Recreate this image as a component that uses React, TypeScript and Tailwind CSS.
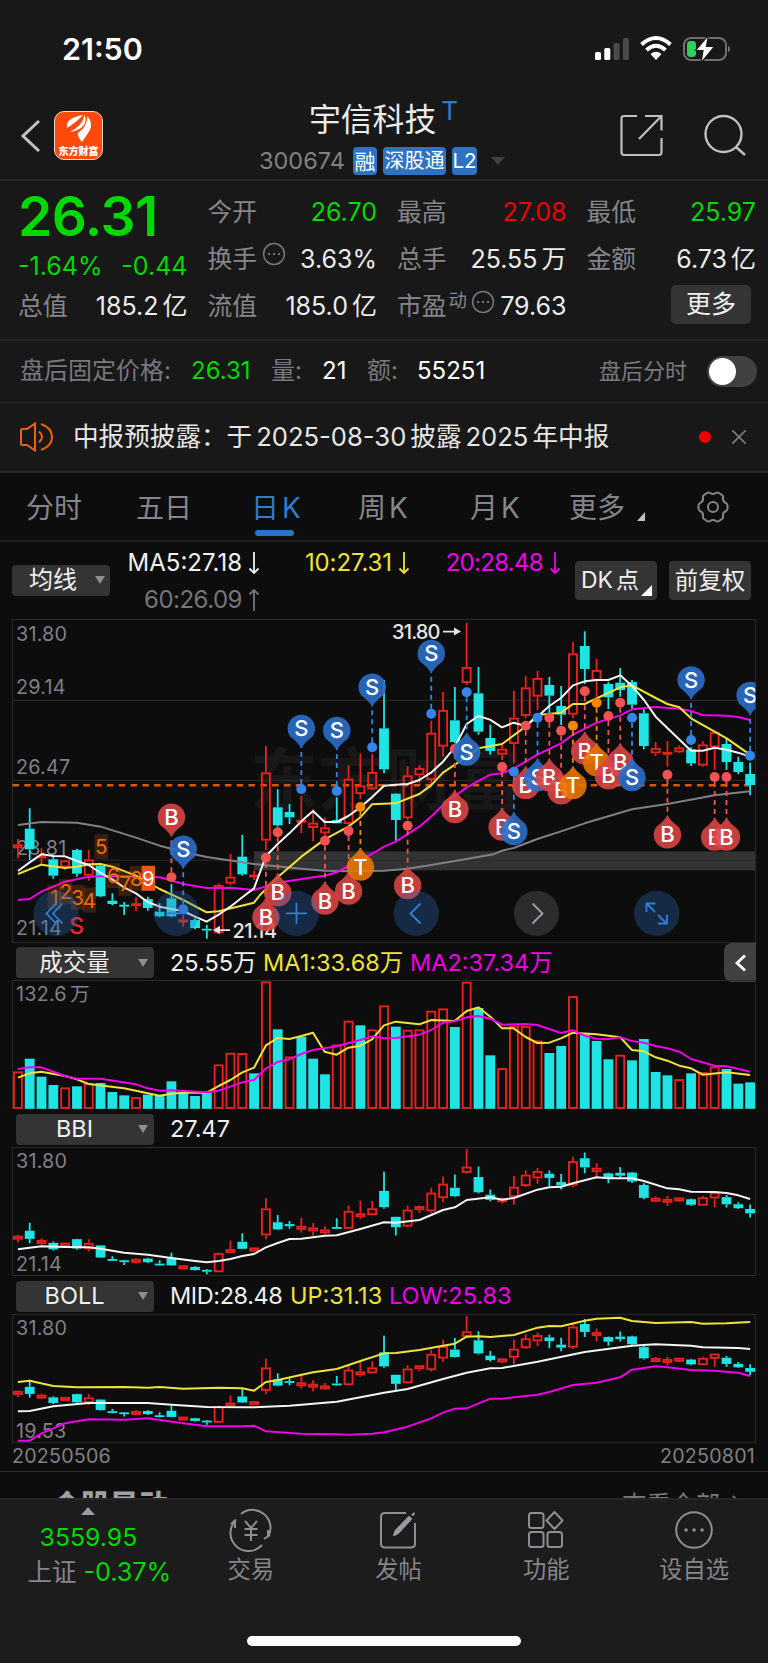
import type { ReactNode } from "react";

type Candle = [number, number, number, number, "r" | "c"];
type Point = [number, number];

const RED = "#e8201f";
const CYAN = "#20e4e4";
const STEP = 11.81;

// high, body top, body bottom, low (3 units per px, measured from y = 610)
const candles: Candle[] = [
  [687, 703, 715, 745, "r"], [595, 656, 718, 750, "c"], [715, 738, 744, 762, "r"],
  [738, 748, 797, 806, "c"], [750, 751, 772, 780, "r"], [716, 720, 791, 800, "c"],
  [720, 748, 797, 812, "r"], [765, 767, 859, 862, "c"], [850, 872, 882, 886, "c"],
  [876, 884, 890, 915, "c"], [862, 880, 888, 902, "r"], [860, 867, 894, 902, "c"],
  [880, 905, 919, 922, "c"], [822, 865, 919, 922, "c"], [915, 930, 936, 950, "r"],
  [925, 930, 954, 958, "c"], [945, 957, 961, 986, "c"], [820, 825, 970, 972, "r"],
  [732, 800, 821, 826, "r"], [675, 740, 793, 797, "c"], [782, 795, 801, 810, "r"],
  [408, 487, 692, 720, "r"], [538, 592, 646, 650, "c"], [582, 606, 622, 642, "c"],
  [558, 630, 638, 670, "r"], [598, 638, 654, 694, "r"], [622, 652, 670, 684, "r"],
  [562, 630, 640, 640, "c"], [466, 506, 642, 645, "r"], [430, 526, 552, 568, "r"],
  [432, 486, 538, 540, "r"], [210, 355, 478, 490, "c"], [550, 551, 630, 692, "c"],
  [468, 496, 625, 630, "r"], [466, 474, 496, 520, "r"], [332, 368, 510, 522, "r"],
  [246, 300, 410, 440, "r"], [231, 331, 396, 400, "c"], [38, 171, 219, 226, "r"],
  [171, 250, 365, 374, "c"], [344, 384, 423, 434, "c"], [405, 416, 434, 450, "r"],
  [242, 323, 402, 460, "r"], [198, 232, 318, 325, "r"], [182, 204, 260, 300, "r"],
  [201, 225, 257, 320, "c"], [228, 288, 314, 345, "c"], [97, 130, 314, 325, "r"],
  [64, 108, 177, 222, "c"], [146, 180, 212, 260, "r"], [216, 222, 262, 298, "c"],
  [174, 218, 240, 260, "c"], [210, 216, 284, 296, "c"], [298, 310, 408, 418, "c"],
  [396, 414, 430, 438, "r"], [393, 427, 433, 470, "r"], [406, 412, 427, 430, "r"],
  [412, 418, 460, 468, "c"], [394, 403, 467, 470, "r"], [364, 366, 412, 480, "r"],
  [386, 402, 456, 480, "c"], [440, 456, 486, 492, "c"], [458, 492, 525, 556, "c"],
];

// moving averages of the main pane, [x, y] in the same units
const ma5: Point[] = [[54, 783], [89, 757], [124, 733], [160, 738], [195, 739], [231, 753], [266, 765], [302, 789], [337, 808], [372, 832], [408, 850], [443, 876], [479, 890], [514, 897], [550, 903], [585, 920], [620, 935], [656, 914], [691, 890], [727, 862], [762, 835], [798, 738], [833, 702], [868, 670], [904, 634], [939, 603], [974, 636], [1010, 636], [1045, 618], [1081, 592], [1116, 562], [1152, 527], [1187, 524], [1223, 522], [1258, 510], [1293, 488], [1329, 455], [1364, 412], [1400, 342], [1435, 318], [1470, 329], [1506, 352], [1541, 338], [1577, 348], [1612, 320], [1648, 288], [1683, 264], [1719, 226], [1754, 214], [1790, 210], [1825, 210], [1861, 196], [1896, 228], [1932, 270], [1967, 320], [2073, 422], [2108, 422], [2144, 413], [2180, 419], [2214, 428], [2250, 440]];
const ma10: Point[] = [[54, 792], [124, 764], [195, 774], [231, 770], [266, 763], [302, 762], [337, 770], [408, 797], [479, 837], [550, 870], [620, 907], [656, 904], [762, 878], [780, 855], [833, 802], [904, 740], [974, 688], [1045, 650], [1081, 622], [1116, 583], [1187, 580], [1258, 552], [1293, 526], [1329, 488], [1400, 440], [1435, 415], [1506, 402], [1577, 350], [1612, 315], [1683, 308], [1719, 282], [1754, 282], [1861, 232], [1896, 226], [1967, 264], [2002, 282], [2038, 292], [2073, 325], [2180, 385], [2250, 434]];
const ma20: Point[] = [[54, 870], [89, 867], [124, 845], [195, 815], [266, 800], [337, 798], [479, 802], [550, 822], [620, 834], [691, 833], [762, 840], [833, 818], [939, 802], [974, 797], [1010, 787], [1045, 768], [1116, 732], [1152, 710], [1187, 695], [1258, 650], [1293, 620], [1329, 585], [1400, 532], [1470, 494], [1506, 490], [1541, 476], [1612, 434], [1683, 400], [1719, 374], [1790, 338], [1861, 316], [1896, 298], [1967, 291], [2038, 296], [2073, 303], [2108, 315], [2180, 317], [2214, 321], [2250, 330]];
const ma60: Point[] = [[54, 645], [124, 636], [231, 638], [302, 650], [408, 683], [479, 707], [550, 726], [620, 741], [762, 762], [904, 776], [974, 782], [1045, 784], [1152, 782], [1223, 776], [1293, 765], [1400, 747], [1480, 733], [1506, 722], [1541, 714], [1612, 687], [1683, 664], [1754, 640], [1896, 598], [2002, 582], [2144, 556], [2250, 544]];

// volume bars, y of the top edge (3 units per px, from y = 940)
const volume = "r395 c356 c410 c435 r443 c439 r430 c429 c456 c466 r472 c464 c468 c424 c458 c468 c458 r374 r339 r340 c400 r125 c268 r350 c290 c356 c403 r314 r243 c256 r269 r197 c260 r270 r269 r213 r206 c261 r126 c204 c346 r385 r258 r259 r302 c339 c318 r169 c283 c303 c358 r345 c361 c297 c396 c406 r418 c400 r397 r380 c387 c431 c427".split(" ");
const volMa1: Point[] = [[54, 413], [89, 400], [124, 395], [195, 408], [231, 418], [266, 432], [372, 445], [479, 467], [514, 461], [550, 458], [620, 458], [656, 438], [691, 420], [727, 397], [762, 383], [798, 316], [833, 294], [868, 297], [904, 288], [939, 278], [974, 335], [1010, 344], [1045, 323], [1081, 317], [1116, 298], [1152, 256], [1187, 245], [1258, 253], [1294, 240], [1364, 243], [1400, 213], [1435, 202], [1471, 230], [1506, 265], [1541, 265], [1577, 291], [1612, 309], [1648, 308], [1683, 295], [1719, 278], [1790, 283], [1861, 292], [1896, 330], [1932, 334], [1967, 352], [2002, 362], [2038, 377], [2073, 385], [2108, 404], [2180, 397], [2250, 405]];
const volMa2: Point[] = [[54, 387], [89, 382], [124, 382], [195, 408], [231, 416], [302, 416], [408, 433], [443, 445], [479, 452], [514, 451], [620, 457], [656, 452], [727, 427], [762, 420], [798, 385], [833, 366], [868, 358], [904, 342], [939, 330], [1010, 319], [1081, 300], [1116, 289], [1152, 295], [1187, 294], [1258, 284], [1294, 270], [1329, 248], [1364, 244], [1400, 232], [1435, 228], [1471, 236], [1506, 254], [1577, 252], [1612, 255], [1683, 279], [1719, 271], [1754, 287], [1790, 296], [1825, 297], [1861, 292], [1896, 303], [1932, 308], [1967, 318], [2002, 325], [2038, 335], [2073, 357], [2144, 377], [2180, 379], [2250, 395]];

// indicator lines, [candle index, y]
const bbi: Point[] = [[0, 418], [2, 409], [4, 411], [6, 412], [7, 416], [9, 428], [11, 434], [13, 444], [15, 453], [16, 457], [17, 453], [18, 447], [19, 438], [20, 432], [21, 412], [22, 399], [23, 387], [24, 386], [26, 377], [27, 376], [29, 357], [31, 337], [32, 338], [34, 330], [36, 300], [37, 292], [38, 270], [40, 262], [41, 269], [42, 264], [44, 239], [45, 232], [46, 230], [47, 220], [49, 202], [50, 205], [52, 205], [53, 213], [55, 235], [56, 238], [57, 245], [59, 246], [60, 249], [61, 256], [62, 267]];
const bollUp: Point[] = [[0, 306], [1, 302], [3, 318], [5, 322], [9, 321], [11, 323], [12, 321], [14, 326], [17, 323], [19, 325], [20, 332], [21, 306], [22, 300], [25, 277], [27, 267], [29, 243], [31, 220], [32, 219], [34, 210], [36, 197], [37, 191], [38, 170], [39, 169], [40, 171], [42, 165], [44, 143], [45, 138], [46, 139], [48, 122], [49, 116], [51, 113], [52, 123], [54, 129], [57, 126], [58, 131], [60, 130], [62, 126]];
const bollMid: Point[] = [[0, 394], [1, 393], [3, 379], [6, 369], [11, 369], [13, 374], [16, 381], [20, 382], [23, 377], [27, 365], [31, 338], [33, 327], [36, 297], [38, 278], [40, 265], [41, 264], [44, 245], [48, 216], [52, 197], [54, 193], [57, 197], [58, 202], [61, 204], [62, 207]];
const bollLow: Point[] = [[0, 482], [1, 482], [2, 460], [4, 430], [6, 418], [9, 419], [11, 415], [14, 430], [16, 439], [19, 439], [20, 437], [21, 454], [24, 461], [27, 463], [28, 464], [30, 461], [31, 457], [33, 440], [35, 415], [36, 398], [37, 386], [38, 385], [40, 356], [41, 356], [43, 348], [44, 344], [45, 336], [47, 315], [49, 308], [51, 292], [52, 269], [54, 259], [55, 262], [57, 270], [59, 272], [61, 278], [62, 288]];

// letter, candle index, pin y, dot y
const pins: [string, number, number, number][] = [
  ["B", 13, 622, 802], ["S", 14, 718, 898], ["B", 21, 922, 743], ["B", 22, 848, 667],
  ["S", 24, 356, 537], ["B", 26, 873, 692], ["S", 27, 362, 543], ["B", 28, 843, 663],
  ["T", 29, 771, 591], ["S", 30, 232, 412], ["B", 33, 826, 647], ["S", 35, 131, 311],
  ["B", 37, 598, 417], ["S", 38, 426, 247], ["B", 41, 651, 471], ["S", 42, 664, 485],
  ["B", 43, 526, 347], ["S", 44, 503, 323], ["B", 45, 503, 323], ["B", 46, 542, 362],
  ["T", 47, 526, 347], ["B", 48, 423, 244], ["T", 49, 457, 278], ["B", 50, 497, 318],
  ["B", 51, 457, 278], ["S", 52, 502, 323], ["B", 55, 674, 494], ["S", 57, 210, 390],
  ["B", 59, 681, 501], ["B", 60, 681, 501], ["S", 62, 257, 437],
];
const pinFill: Record<string, string> = { B: "#d94444", S: "#2a6ec9", T: "#e87400" };
const dotFill: Record<string, string> = { B: "#f45252", S: "#3485ea", T: "#ff8400" };

const counts: [string, number, number][] = [
  ["1", 163, 862], ["2", 197, 845], ["3", 233, 862], ["4", 268, 870], ["5", 304, 710],
  ["6", 340, 797], ["7", 375, 820], ["8", 409, 805], ["9", 445, 805],
];

const cx = (i: number) => 17.9 + i * STEP;

function Line({ points, color, map }: { points: Point[]; color: string; map: (p: Point) => Point }) {
  return (
    <polyline
      fill="none"
      points={points.map((p) => map(p).join(",")).join(" ")}
      stroke={color}
      strokeLinejoin="round"
      strokeWidth="2"
    />
  );
}

function Candles({ toY, small }: { toY: (v: number) => number; small?: boolean }) {
  return (
    <g>
      {candles.map(([h, t, b, l, c], i) => {
        const x = cx(i);
        const mid = (toY(t) + toY(b)) / 2;
        const min = c === "r" ? (small ? 4 : 3) : 1.8;
        const height = Math.max(toY(b) - toY(t), min);
        const top = mid - height / 2;
        const color = c === "r" ? RED : CYAN;
        return (
          <g fill={color} key={i.toString()} stroke={color}>
            <path d={`M${x} ${toY(h)}V${top}M${x} ${top + height}V${toY(l)}`} strokeWidth="1.8" />
            {c === "c" ? (
              <rect height={height} stroke="none" width="9.8" x={x - 4.9} y={top} />
            ) : (
              <rect
                fill="none"
                height={height - 1.9}
                strokeWidth="1.9"
                width="8"
                x={x - 4}
                y={top + 0.95}
              />
            )}
          </g>
        );
      })}
    </g>
  );
}

function AxisText({ x = 16, y, children }: { x?: number; y: number; children: string }) {
  return (
    <text fill="#808086" fontSize="19.8" letterSpacing="0.2" x={x} y={y}>
      {children}
    </text>
  );
}

function Pin({ pin }: { pin: [string, number, number, number] }) {
  const [letter, i, py, dy] = pin;
  const x = cx(i);
  const y = 610 + py / 3;
  const dot = 610 + dy / 3;
  const dir = dy > py ? 1 : -1;
  return (
    <g>
      <path
        d={`M${x} ${dot - dir * 5}V${y + dir * 18}`}
        stroke={dotFill[letter]}
        strokeDasharray="5 4"
        strokeWidth="1.8"
      />
      <circle cx={x} cy={dot} fill={dotFill[letter]} r="5" />
      <path
        d={`M${x - 11} ${y + dir * 8}Q${x - 3} ${y + dir * 14} ${x} ${y + dir * 19.5}Q${x + 3} ${y + dir * 14} ${x + 11} ${y + dir * 8}A13.7 13.7 0 1 ${dir === 1 ? 0 : 1} ${x - 11} ${y + dir * 8}Z`}
        fill={pinFill[letter]}
        fillOpacity="0.9"
      />
      <text fill="#fff" fontSize="22" fontWeight="500" textAnchor="middle" x={x} y={y + 7.8}>
        {letter}
      </text>
    </g>
  );
}

function MainChart() {
  const toY = (v: number) => 610 + v / 3;
  const map = ([x, y]: Point): Point => [x / 3, 610 + y / 3];
  return (
    <svg className="block" height="334" viewBox="0 610 768 334" width="768">
      <text
        fill="#181818"
        fontFamily="'Noto Sans CJK SC', sans-serif"
        fontSize="68"
        fontWeight="700"
        x="250"
        y="805"
      >
        东方财富
      </text>
      <rect fill="#333" height="19" width="501.5" x="254" y="851.3" />
      <path d="M12.5 700.4H755.5M12.5 780.4H755.5M12.5 860.2H755.5" stroke="#2a2a2a" />
      <rect fill="none" height="323" stroke="#2a2a2a" width="743" x="12.5" y="619.5" />
      <AxisText y={640.7}>31.80</AxisText>
      <AxisText y={693.8}>29.14</AxisText>
      <AxisText y={774}>26.47</AxisText>
      <AxisText y={855}>23.81</AxisText>
      <AxisText y={935.2}>21.14</AxisText>
      <path d="M12.5 785.2H751" stroke="#d9560e" strokeDasharray="6.5 5.3" strokeWidth="2.4" />
      <text fill="#f5252a" fontSize="23" fontWeight="500" textAnchor="middle" x="76.7" y="933.5">
        S
      </text>
      <Candles toY={toY} />
      <Line color="#808084" map={map} points={ma60} />
      <Line color="#f000e8" map={map} points={ma20} />
      <Line color="#efe23a" map={map} points={ma10} />
      <Line color="#f4f4f4" map={map} points={ma5} />
      {counts.map(([n, x, y]) => (
        <g key={n}>
          <rect
            fill={n === "9" ? "#f0541a" : "#f06a10"}
            fillOpacity={n === "9" ? 1 : 0.2}
            height="25"
            width="13.4"
            x={x / 3 - 6.7}
            y={597.5 + y / 3}
          />
          <text
            fill={n === "9" ? "#fff" : "#ee6c0a"}
            fontSize="20.5"
            textAnchor="middle"
            x={x / 3}
            y={617.5 + y / 3}
          >
            {n}
          </text>
        </g>
      ))}
      <g fill="#e4e4e4" fontSize="20">
        <text fontWeight="500" textLength="48.5" x="392" y="638.8">
          31.80
        </text>
        <path d="M443 630.7H454V627.5L461 631.5L454 635.5V632.4H443Z" />
        <text fontWeight="500" textLength="44.5" x="232.5" y="938.3">
          21.14
        </text>
        <path d="M230 929.2H220V925.8L213 930L220 934V930.9H230Z" />
      </g>
      <svg height="334" viewBox="0 610 755.5 334" width="755.5" x="0" y="610">
        {pins.map((pin) => (
          <Pin key={pin[1].toString()} pin={pin} />
        ))}
      </svg>
      <g fill="none" stroke="#2f7fd8" strokeWidth="1.8">
        <g fill="#2b69b4" fillOpacity="0.33" stroke="none">
          <circle cx="56" cy="913.3" r="22.6" />
          <circle cx="176.5" cy="913.3" r="22.6" />
          <circle cx="296.5" cy="913.3" r="22.6" />
          <circle cx="416.3" cy="913.3" r="22.6" />
          <circle cx="656.7" cy="913.3" r="22.6" />
        </g>
        <circle cx="536.5" cy="913.3" fill="#2c2c2e" r="22.6" stroke="none" />
        <path d="M56 903.5L46.5 913.5L56 923.5M62.5 903.5L53 913.5L62.5 923.5" />
        <path d="M166 913.3H187" />
        <path d="M286 913.3H307M296.5 902.8V923.8" />
        <path d="M420.5 903.5L410.5 913.5L420.5 923.5" />
        <path d="M532.5 903.5L542.5 913.5L532.5 923.5" stroke="#a0a0a4" />
        <path d="M655 912L647 904M646.5 912V903.5H655.5M658 915L666 923M667 914.5V923.5H658" />
      </g>
    </svg>
  );
}

function VolumeChart() {
  const map = ([x, y]: Point): Point => [x / 3, 940 + y / 3];
  return (
    <svg className="block" height="130" viewBox="0 980 768 130" width="768">
      <rect fill="none" height="128" stroke="#2a2a2a" width="743" x="12.5" y="980.5" />
      <AxisText y={1000.5}>132.6</AxisText>
      <AxisText x={70} y={1000.5}>万</AxisText>
      {volume.map((v, i) => {
        const y = 940 + Number(v.slice(1)) / 3;
        return v[0] === "c" ? (
          <rect fill={CYAN} height={1108.8 - y} key={i.toString()} width="9.8" x={cx(i) - 4.9} y={y} />
        ) : (
          <rect
            fill="none"
            height={1107.2 - y}
            key={i.toString()}
            stroke={RED}
            strokeWidth="1.9"
            width="8"
            x={cx(i) - 4}
            y={y + 0.7}
          />
        );
      })}
      <Line color="#efe23a" map={map} points={volMa1} />
      <Line color="#f000e8" map={map} points={volMa2} />
    </svg>
  );
}

function BbiChart() {
  return (
    <svg className="block" height="130" viewBox="0 1147 768 130" width="768">
      <rect fill="none" height="128" stroke="#2a2a2a" width="743" x="12.5" y="1147.5" />
      <AxisText y={1167.5}>31.80</AxisText>
      <AxisText y={1271}>21.14</AxisText>
      <Candles small toY={(v) => 1149 + (v - 38) * 0.1322} />
      <Line color="#f4f4f4" map={([i, y]) => [cx(i), 1110 + y / 3]} points={bbi} />
    </svg>
  );
}

function BollChart() {
  const map = ([i, y]: Point): Point => [cx(i), 1280 + y / 3];
  return (
    <svg className="block" height="129" viewBox="0 1314 768 129" width="768">
      <rect fill="none" height="128" stroke="#2a2a2a" width="743" x="12.5" y="1314.5" />
      <AxisText y={1334.5}>31.80</AxisText>
      <AxisText y={1438}>19.53</AxisText>
      <Candles small toY={(v) => 1316 + (v - 38) * 0.1146} />
      <Line color="#efe23a" map={map} points={bollUp} />
      <Line color="#f4f4f4" map={map} points={bollMid} />
      <Line color="#f000e8" map={map} points={bollLow} />
    </svg>
  );
}

function Stat({ label, value, color = "text-[#ececec]" }: { label: ReactNode; value: string; color?: string }) {
  return (
    <div className="flex h-[47px] items-center justify-between whitespace-nowrap">
      <span className="flex items-center text-[24.8px] text-[#85858b]">{label}</span>
      <span className={`text-[25px] [word-spacing:-3px] ${color}`}>{value}</span>
    </div>
  );
}

function InfoDots() {
  return (
    <svg fill="none" height="24" viewBox="0 0 24 24" width="24">
      <circle cx="12" cy="12" r="10.4" stroke="#75757a" strokeWidth="1.5" />
      <path d="M7 12h.1M12 12h.1M17 12h.1" stroke="#85858b" strokeLinecap="round" strokeWidth="2.2" />
    </svg>
  );
}

function PaneButton({ children }: { children: string }) {
  return (
    <div className="flex h-[31px] w-[138px] items-center rounded-[4px] bg-[#343434] text-[23.5px] text-[#f0f0f0]">
      <span className="w-[117px] text-center">{children}</span>
      <svg className="ml-[5px]" fill="#8e8e93" height="8" viewBox="0 0 10 8" width="10">
        <path d="M0 0H10L5 8Z" />
      </svg>
    </div>
  );
}

function Tab({ children, active, className }: { children: string; active?: boolean; className: string }) {
  return (
    <div className={`relative flex h-full items-center whitespace-nowrap pt-[2px] text-[28px] [word-spacing:-5px] ${className} ${active ? "text-[#2f7bd0]" : "text-[#85858b]"}`}>
      {children}
      {active && <span className="absolute bottom-[4px] left-[4px] h-[6px] w-[39px] rounded-full bg-[#2f74c4]" />}
    </div>
  );
}

function NavItem({ label, children }: { label: string; children: ReactNode }) {
  return (
    <div className="flex w-[148px] flex-col items-center pt-[9px]">
      <svg className="overflow-visible" fill="none" height="42" stroke="#8e8e93" strokeWidth="2" viewBox="0 0 42 42" width="42">
        {children}
      </svg>
      <span className="mt-[2px] text-[23.3px] leading-[34px] text-[#85858b]">{label}</span>
    </div>
  );
}

function Arrow({ up }: { up?: boolean }) {
  return (
    <svg
      className={up ? "ml-[6px] rotate-180" : "ml-[6px]"}
      fill="none"
      height="24"
      stroke="currentColor"
      strokeWidth="1.8"
      viewBox="0 0 12 24"
      width="12"
    >
      <path d="M6 1V22M1.5 17.5L6 22L10.5 17.5" />
    </svg>
  );
}

export default function App() {
  return (
    <div className="h-[1663px] w-[768px] overflow-hidden bg-[#0d0d0d] font-[Inter,'Noto_Sans_CJK_SC',sans-serif] leading-none">
      {/* Status bar */}
      <div className="flex h-[98px] items-center justify-between bg-[#181818] pr-[36px] pl-[62px]">
        <span className="text-[30.5px] font-semibold text-white">21:50</span>
        <svg fill="none" height="28" viewBox="0 0 137 28" width="137">
          <g fill="#fff">
            <rect height="8" rx="1.5" width="6" x="0" y="17" />
            <rect height="12" rx="1.5" width="6" x="9.3" y="13" />
            <rect fill="#4a4a4a" height="17" rx="1.5" width="6" x="18.6" y="8" />
            <rect fill="#4a4a4a" height="22" rx="1.5" width="6" x="27.9" y="3" />
            <path d="M61 25L55.5 19Q61 14.5 66.5 19Z" />
          </g>
          <path d="M46.5 9.5Q61 -3.5 75.5 9.5M51.5 15Q61 6.5 70.5 15" stroke="#fff" strokeWidth="4" />
          <rect height="22" rx="7" stroke="#6e6e6e" strokeWidth="2" width="42" x="89" y="3" />
          <path d="M133.5 11Q136 14 133.5 17Z" fill="#6e6e6e" stroke="#6e6e6e" />
          <rect fill="#30d158" height="16" rx="3.5" width="9" x="92" y="6" />
          <path d="M113.5 0L100.5 15.5H108L106 28L119.5 11.5H111.5Z" fill="#fff" stroke="#181818" strokeWidth="1.2" />
        </svg>
      </div>

      {/* Title bar */}
      <div className="flex h-[83px] items-start border-b-2 border-[#252525] bg-[#181818] pl-[20px]">
        <svg className="mt-[21px]" fill="none" height="34" viewBox="0 0 22 34" width="22">
          <path d="M19 2L3 17L19 32" stroke="#c4c4c4" strokeWidth="3" />
        </svg>
        <div className="mt-[13px] ml-[12px] flex h-[49px] w-[49px] flex-col items-center rounded-[10px] border border-[#e9d6cc] bg-[#ff4a0a]">
          <svg fill="#fff" height="30" viewBox="0 0 30 30" width="30">
            <path d="M3 16Q1 6 19 3Q14 9 3 16ZM5.5 20Q19 13.5 20.5 3Q23 8 20 13Q15 19 5.5 20ZM18 30Q12 23 14.5 20.5Q23 15 23.500 4Q29 11 26 18Z" />
          </svg>
          <span className="mt-[4px] whitespace-nowrap font-['Noto_Sans_CJK_SC'] text-[10px] font-black text-white">东方财富</span>
        </div>
        <div className="ml-[156px] w-[250px]">
          <div className="flex h-[46px] items-start pl-[50px]">
            <span className="mt-[6px] text-[31.8px] text-[#ececec]">宇信科技</span>
            <span className="ml-[5px] text-[26px] text-[#2f7bd0]">T</span>
          </div>
          <div className="mt-[3px] flex items-center gap-[6px] text-[21px] text-white">
            <span className="w-[88px] text-[23.5px] text-[#808086]">300674</span>
            <span className="flex h-[28px] w-[24px] items-center justify-center rounded-[4px] bg-[#2f72c0]">融</span>
            <span className="flex h-[28px] w-[63px] items-center justify-center whitespace-nowrap rounded-[4px] bg-[#2f72c0] text-[20px]">深股通</span>
            <span className="flex h-[28px] w-[25px] items-center justify-center rounded-[4px] bg-[#2f72c0] text-[20.5px]">L2</span>
            <svg className="ml-[8px]" fill="#404042" height="8" viewBox="0 0 14 8" width="14">
              <path d="M0 0H14L7 8Z" />
            </svg>
          </div>
        </div>
        <svg className="mt-[16px] ml-[110px]" fill="none" height="44" stroke="#c0c0c0" strokeWidth="2.2" viewBox="0 0 44 44" width="44">
          <path d="M18 2H5Q2.5 2 2.5 4.5V38Q2.5 41 5 41H40Q42.5 41 42.5 38V24M26 2H42.5V16.5M42 2.5L20 25" />
        </svg>
        <svg className="mt-[16px] ml-[40px]" fill="none" height="44" stroke="#c0c0c0" strokeWidth="2.4" viewBox="0 0 44 44" width="44">
          <circle cx="20.5" cy="20" r="18" />
          <path d="M33 33L42 41" />
        </svg>
      </div>

      {/* Quote */}
      <div className="grid h-[160px] grid-cols-4 gap-x-[20px] border-b-2 border-[#242424] bg-[#181818] pt-[8px] pr-[12px] pl-[18px]">
        <div className="flex flex-col text-[#00d800]">
          <span className="h-[58px] text-[55px] leading-[54px] font-semibold tracking-[-0.5px]">26.31</span>
          <div className="flex h-[36px] items-center justify-between pt-[2px] text-[25px]">
            <span>-1.64%</span>
            <span>-0.44</span>
          </div>
          <Stat label="总值" value="185.2 亿" />
        </div>
        <div>
          <Stat color="text-[#00d800]" label="今开" value="26.70" />
          <Stat
            label={
              <>
                换手
                <span className="mb-3 ml-[5px]">
                  <InfoDots />
                </span>
              </>
            }
            value="3.63%"
          />
          <Stat label="流值" value="185.0 亿" />
        </div>
        <div>
          <Stat color="text-[#f00000]" label="最高" value="27.08" />
          <Stat label="总手" value="25.55 万" />
          <Stat
            label={
              <>
                市盈<span className="mb-3 ml-[2px] text-[18.5px]">动</span>
                <span className="mb-[9px] ml-[4px]">
                  <InfoDots />
                </span>
              </>
            }
            value="79.63"
          />
        </div>
        <div>
          <Stat color="text-[#00d800]" label="最低" value="25.97" />
          <Stat label="金额" value="6.73 亿" />
          <div className="mt-[2px] mr-[5px] ml-auto flex h-[39px] w-[80px] items-center justify-center rounded-[5px] bg-[#343434] text-[25px] text-[#f0f0f0]">
            更多
          </div>
        </div>
      </div>

      {/* After-hours price */}
      <div className="flex h-[62px] items-center whitespace-nowrap border-b border-[#282828] bg-[#181818] pr-[11px] pb-[1px] pl-[20px] text-[24px] text-white">
        <span className="w-[171px] text-[#78787e]">盘后固定价格:</span>
        <span className="w-[80px] text-[#00d800]">26.31</span>
        <span className="w-[51px] text-[#78787e]">量:</span>
        <span className="w-[45px]">21</span>
        <span className="w-[50px] text-[#78787e]">额:</span>
        <span>55251</span>
        <span className="ml-auto text-[22px] text-[#78787e]">盘后分时</span>
        <span className="ml-[20px] flex h-[31px] w-[50px] items-center rounded-full bg-[#414144] pl-[2px]">
          <span className="h-[27px] w-[27px] rounded-full bg-white" />
        </span>
      </div>

      {/* Notice */}
      <div className="flex h-[70px] items-center border-b-2 border-[#282828] bg-[#181818] pl-[19px]">
        <svg fill="none" height="30" stroke="#f4600c" strokeWidth="2" viewBox="0 0 35 30" width="35">
          <path d="M2 8Q2 7 3 7H8L16 1.5V28.5L8 23H3Q2 23 2 22ZM20 9.5Q26 15 20 20.5M22 2Q33 6 33 15T22 28" />
        </svg>
        <span className="ml-[19px] w-[538px] whitespace-nowrap text-[25.6px] text-[#e6e6e6]">
          中报预披露：于<span className="mx-[4px]">2025-08-30</span>披露<span className="mx-[4px]">2025</span>年中报
        </span>
        <span className="ml-[88px] h-[12px] w-[12px] rounded-full bg-[#f00000]" />
        <svg className="ml-[20px]" height="16" stroke="#78787e" strokeWidth="2" viewBox="0 0 18 18" width="16">
          <path d="M1.5 1.5L16.5 16.5M16.5 1.5L1.5 16.5" />
        </svg>
      </div>

      {/* Chart period tabs */}
      <div className="flex h-[69px] items-center border-b-2 border-[#202020]">
        <Tab className="ml-[26px] w-[58px]">分时</Tab>
        <Tab className="ml-[52px] w-[58px]">五日</Tab>
        <Tab active className="ml-[57px] w-[52px]">
          日 K
        </Tab>
        <Tab className="ml-[55px] w-[54px]">周 K</Tab>
        <Tab className="ml-[58px] w-[54px]">月 K</Tab>
        <Tab className="ml-[45px] w-[58px]">更多</Tab>
        <svg className="mt-[20px] ml-[10px]" fill="#c0c0c0" height="9" viewBox="0 0 8 9" width="8">
          <path d="M8 0V9H0Z" />
        </svg>
        <svg className="ml-[51px]" fill="none" height="34" stroke="#85858b" strokeWidth="2" viewBox="0 0 34 34" width="34">
          <circle cx="17" cy="17" r="5" />
          <path d="M11 3Q12.5 2 14 3Q17 5 20 3Q21.5 2 23 3L26 5Q27.5 6 27 8Q26.5 11.5 30 13Q31.5 14 31.5 15.5V18.5Q31.5 20 30 21Q26.5 22.5 27 26Q27.5 28 26 29L23 31Q21.5 32 20 31Q17 29 14 31Q12.5 32 11 31L8 29Q6.5 28 7 26Q7.5 22.5 4 21Q2.5 20 2.5 18.5V15.5Q2.5 14 4 13Q7.5 11.5 7 8Q6.5 6 8 5Z" />
        </svg>
      </div>

      {/* Moving averages */}
      <div className="flex h-[68px] items-center pl-[12px]">
        <div className="mt-[8px] flex h-[31px] w-[98px] items-center rounded-[4px] bg-[#343434] pl-[17px] text-[24px] text-[#f0f0f0]">
          均线
          <svg className="ml-[18px]" fill="#8e8e93" height="8" viewBox="0 0 10 8" width="10">
            <path d="M0 0H10L5 8Z" />
          </svg>
        </div>
        <div className="mt-[10px] ml-[17px] flex w-[448px] flex-col text-[24px]">
          <div className="flex h-[37px] items-center whitespace-nowrap">
            <span className="flex w-[133px] items-center justify-end text-[#f0f0f0]">
              MA5:27.18
              <Arrow />
            </span>
            <span className="flex w-[150px] items-center justify-end tracking-[-0.1px] text-[#efe23a]">
              10:27.31
              <Arrow />
            </span>
            <span className="flex w-[151px] items-center justify-end tracking-[-0.7px] text-[#f000e8]">
              20:28.48
              <Arrow />
            </span>
          </div>
          <div className="flex h-[36px] w-[133px] items-center justify-end tracking-[-0.5px] text-[#75757a]">
            60:26.09
            <Arrow up />
          </div>
        </div>
        <div className="relative mt-[9px] flex h-[39px] w-[82px] items-center gap-[3px] rounded-[4px] bg-[#343434] pl-[6px] text-[23px] text-[#f0f0f0]">
          <span>DK</span>
          <span>点</span>
          <svg className="absolute right-[5px] bottom-[4px]" fill="#fff" height="11" viewBox="0 0 11 11" width="11">
            <path d="M11 0V11H0Z" />
          </svg>
        </div>
        <div className="mt-[9px] ml-[12px] flex h-[39px] w-[82px] items-center justify-center whitespace-nowrap rounded-[4px] bg-[#343434] text-[23.5px] text-[#f0f0f0]">
          前复权
        </div>
      </div>

      <MainChart />

      <div className="flex h-[36px] items-center whitespace-nowrap pt-[1px] pl-[16px] text-[23.5px]">
        <PaneButton>成交量</PaneButton>
        <span className="ml-[16px] w-[93px] text-[#f0f0f0]">25.55万</span>
        <span className="w-[147px] text-[#efe23a]">MA1:33.68万</span>
        <span className="text-[#f000e8]">MA2:37.34万</span>
        <div className="mr-[12px] ml-auto flex h-[39px] w-[32px] items-center justify-center rounded-l-[8px] bg-[#414141]">
          <svg fill="none" height="18" viewBox="0 0 12 18" width="12">
            <path d="M11 1.5L3 9L11 16.5" stroke="#fff" strokeWidth="2.8" />
          </svg>
        </div>
      </div>
      <VolumeChart />

      <div className="flex h-[37px] items-center pt-[1px] pl-[16px] text-[23.5px]">
        <PaneButton>BBI</PaneButton>
        <span className="ml-[16px] text-[#f0f0f0]">27.47</span>
      </div>
      <BbiChart />

      <div className="flex h-[37px] items-center whitespace-nowrap pt-[1px] pl-[16px] text-[23.5px]">
        <PaneButton>BOLL</PaneButton>
        <span className="ml-[16px] w-[120px] tracking-[-0.4px] text-[#f0f0f0]">MID:28.48</span>
        <span className="w-[99px] text-[#efe23a]">UP:31.13</span>
        <span className="text-[#f000e8]">LOW:25.83</span>
      </div>
      <BollChart />

      <div className="flex h-[29px] items-center justify-between border-b border-[#2c2c2c] pr-[13px] pl-[12px] text-[19.7px] tracking-[0.2px] text-[#808086]">
        <span>20250506</span>
        <span>20250801</span>
      </div>

      {/* Stock news, cut off by the bottom bar */}
      <div className="flex h-[26px] items-start overflow-hidden pl-[52px]">
        <span className="mt-[18px] text-[29px] leading-[32px] font-black text-[#a0a0a6]">个股异动</span>
        <span className="mt-[19px] ml-[454px] text-[24.5px] leading-[28px] text-[#78787e]">查看全部</span>
        <svg className="mt-[23px] ml-[12px]" fill="none" height="14" stroke="#78787e" strokeWidth="2" viewBox="0 0 8 14" width="8">
          <path d="M1 1L7 7L1 13" />
        </svg>
      </div>

      {/* Bottom bar */}
      <div className="flex h-[165px] flex-col border-t-2 border-[#262626] bg-[#1c1c1c]">
        <div className="flex h-[136px]">
          <div className="flex w-[177px] flex-col items-center pt-[7px] text-[24.8px] text-[#00d800]">
            <svg fill="#9a9aa0" height="8" viewBox="0 0 14 8" width="14">
              <path d="M7 0L14 8H0Z" />
            </svg>
            <span className="mt-[9px] leading-[26px]">3559.95</span>
            <span className="mt-[8px] ml-[22px] flex items-center whitespace-nowrap text-[25.2px] leading-[28px]">
              <span className="mr-[7px] text-[24.5px] text-[#85858b]">上证</span>-0.37%
            </span>
          </div>
          <NavItem label="交易">
            <path d="M11 5A18 18 0 0 1 38 28M34 30L40 26M38 21V28M32 36A18 18 0 0 1 5 12M1 15L6 10.5M5 19V12" />
            <path d="M15 12L21 19L27 12M21 19V32M14.5 20H27.5M14.5 26H27.5" />
          </NavItem>
          <NavItem label="发帖">
            <path d="M29 4H8Q4 4 4 8V34.5Q4 38.5 8 38.5H34Q38 38.5 38 34.5V14" />
            <path d="M17 26L18.5 22L32 8L34 10L21 24ZM35.5 6L37 4.5" fill="#9a9aa0" stroke="#9a9aa0" strokeLinecap="round" strokeLinejoin="round" />
          </NavItem>
          <NavItem label="功能">
            <rect height="15" rx="2.5" width="14.5" x="4" y="4" />
            <path d="M29.5 3L37.5 11.5L29.5 20L21.5 11.5Z" strokeLinejoin="round" />
            <rect height="15" rx="2.5" width="14.5" x="4" y="23" />
            <rect height="15" rx="2.5" width="14.5" x="22.5" y="23" />
          </NavItem>
          <NavItem label="设自选">
            <circle cx="21" cy="21" r="17.8" />
            <path d="M13 21h.1M21 21h.1M29 21h.1" strokeLinecap="round" strokeWidth="3.6" />
          </NavItem>
        </div>
        <div className="ml-[247px] h-[10px] w-[274px] rounded-full bg-white" />
      </div>
    </div>
  );
}
